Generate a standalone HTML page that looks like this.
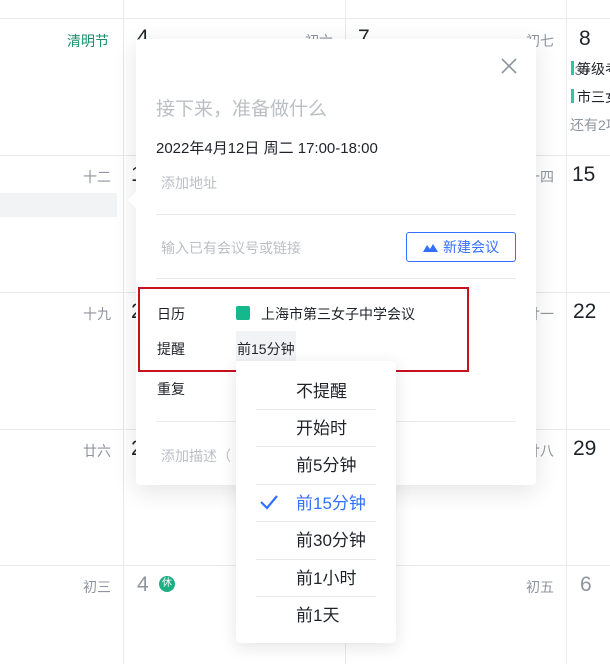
<!DOCTYPE html>
<html><head><meta charset="utf-8"><style>
*{margin:0;padding:0;box-sizing:border-box}
body{width:610px;height:664px;overflow:hidden;background:#fff;font-family:"Liberation Sans","Noto Sans CJK SC",sans-serif;position:relative;color:#1f2329}
.a{position:absolute;white-space:nowrap}
.vl{position:absolute;top:0;bottom:0;width:1px;background:#e8e9eb}
.hl{position:absolute;left:0;right:0;height:1px;background:#e8e9eb}
.lun{font-size:14px;color:#8f959e}
.dn{font-size:21px;color:#1f2329}
.mi{position:absolute;left:20px;width:120px;height:1px;background:#e8e9eb}
.it{position:absolute;left:60px;font-size:17px;color:#1f2329}
</style></head><body>
<div class="vl" style="left:123px"></div>
<div class="vl" style="left:345px"></div>
<div class="vl" style="left:566px"></div>
<div class="hl" style="top:18px"></div>
<div class="hl" style="top:155px"></div>
<div class="hl" style="top:292px"></div>
<div class="hl" style="top:429px"></div>
<div class="hl" style="top:565px"></div>
<div class="a" style="left:0;top:193px;width:117px;height:24px;background:#f2f3f5"></div>

<div class="a lun" style="left:67px;top:31px;color:#1a8f6a">清明节</div>
<div class="a dn" style="left:137px;top:26px">4</div>
<div class="a lun" style="left:305px;top:31px">初六</div>
<div class="a dn" style="left:358px;top:26px">7</div>
<div class="a lun" style="left:526px;top:31px">初七</div>
<div class="a dn" style="left:579px;top:27px">8</div>
<div class="a" style="left:571px;top:63px;font-size:13px;color:#646a73">:30</div>
<div class="a" style="left:571px;top:61px;width:3px;height:14px;background:#34c3a0"></div>
<div class="a" style="left:577px;top:59px;font-size:14px">等级考</div>
<div class="a" style="left:571px;top:89px;width:3px;height:14px;background:#34c3a0"></div>
<div class="a" style="left:577px;top:87px;font-size:14px">市三女</div>
<div class="a" style="left:570px;top:115px;font-size:14px;color:#8f959e">还有2项</div>

<div class="a lun" style="left:83px;top:167px">十二</div>
<div class="a dn" style="left:131px;top:163px">1</div>
<div class="a lun" style="left:526px;top:167px">十四</div>
<div class="a dn" style="left:572px;top:163px">15</div>
<div class="a lun" style="left:83px;top:304px">十九</div>
<div class="a dn" style="left:131px;top:300px">2</div>
<div class="a lun" style="left:526px;top:304px">廿一</div>
<div class="a dn" style="left:573px;top:300px">22</div>
<div class="a lun" style="left:83px;top:441px">廿六</div>
<div class="a dn" style="left:131px;top:437px">2</div>
<div class="a lun" style="left:526px;top:441px">廿八</div>
<div class="a dn" style="left:573px;top:437px">29</div>
<div class="a lun" style="left:83px;top:577px">初三</div>
<div class="a dn" style="left:137px;top:573px;color:#8f959e">4</div>
<div class="a" style="left:159px;top:576px;width:16px;height:16px;border-radius:50%;background:#1fae82;color:#fff;font-size:10px;text-align:center;line-height:16px">休</div>
<div class="a lun" style="left:526px;top:577px">初五</div>
<div class="a dn" style="left:580px;top:573px;color:#8f959e">6</div>

<!-- popup -->
<div class="a" style="left:136px;top:39px;width:400px;height:446px;background:#fff;border-radius:4px;box-shadow:0 6px 24px rgba(31,35,41,.12)"></div>
<div class="a" style="left:130px;top:194px;width:12px;height:12px;background:#fff;transform:rotate(45deg)"></div>
<svg class="a" style="left:501px;top:58px" width="16" height="16" viewBox="0 0 16 16"><path d="M1 1L15 15M15 1L1 15" stroke="#8f959e" stroke-width="1.6"/></svg>
<div class="a" style="left:156px;top:94px;font-size:19px;color:#bbbfc4">接下来，准备做什么</div>
<div class="a" style="left:156px;top:137px;font-size:15px">2022年4月12日 周二 17:00-18:00</div>
<div class="a" style="left:161px;top:173px;font-size:14px;color:#bbbfc4">添加地址</div>
<div class="a" style="left:156px;top:214px;width:360px;height:1px;background:#e8e9eb"></div>
<div class="a" style="left:161px;top:238px;font-size:14px;color:#bbbfc4">输入已有会议号或链接</div>
<div class="a" style="left:406px;top:232px;width:110px;height:30px;border:1px solid #3370ff;border-radius:3px;color:#3370ff;font-size:14px;line-height:28px;padding-left:36px">新建会议</div>
<svg class="a" style="left:423px;top:243px" width="15" height="9" viewBox="0 0 15 9"><path d="M0 9L4 2L7 6L10 1L15 9Z" fill="#3370ff"/></svg>
<div class="a" style="left:156px;top:278px;width:360px;height:1px;background:#e8e9eb"></div>
<div class="a" style="left:138px;top:287px;width:331px;height:85px;border:2px solid #c8101f"></div>
<div class="a" style="left:157px;top:304px;font-size:14px">日历</div>
<div class="a" style="left:236px;top:306px;width:14px;height:14px;border-radius:2px;background:#14b88c"></div>
<div class="a" style="left:261px;top:304px;font-size:14px">上海市第三女子中学会议</div>
<div class="a" style="left:236px;top:331px;width:60px;height:30px;background:#f2f3f5"></div>
<div class="a" style="left:157px;top:339px;font-size:14px">提醒</div>
<div class="a" style="left:237px;top:339px;font-size:14px">前15分钟</div>
<div class="a" style="left:157px;top:379px;font-size:14px">重复</div>
<div class="a" style="left:156px;top:421px;width:360px;height:1px;background:#e8e9eb"></div>
<div class="a" style="left:161px;top:446px;font-size:14px;color:#bbbfc4">添加描述（</div>

<!-- dropdown -->
<div class="a" style="left:236px;top:361px;width:160px;height:282px;background:#fff;border-radius:4px;box-shadow:0 4px 16px rgba(31,35,41,.12)">
<div class="it" style="top:16px">不提醒</div>
<div class="mi" style="top:48px"></div>
<div class="it" style="top:53px">开始时</div>
<div class="mi" style="top:85px"></div>
<div class="it" style="top:90px">前5分钟</div>
<div class="mi" style="top:123px"></div>
<svg class="a" style="left:23px;top:133px" width="20" height="16" viewBox="0 0 20 16"><path d="M2 8L8 14L18 2" stroke="#3370ff" stroke-width="2.2" fill="none"/></svg>
<div class="it" style="top:128px;color:#3370ff">前15分钟</div>
<div class="mi" style="top:160px"></div>
<div class="it" style="top:165px">前30分钟</div>
<div class="mi" style="top:198px"></div>
<div class="it" style="top:203px">前1小时</div>
<div class="mi" style="top:235px"></div>
<div class="it" style="top:240px">前1天</div>
</div>
</body></html>
